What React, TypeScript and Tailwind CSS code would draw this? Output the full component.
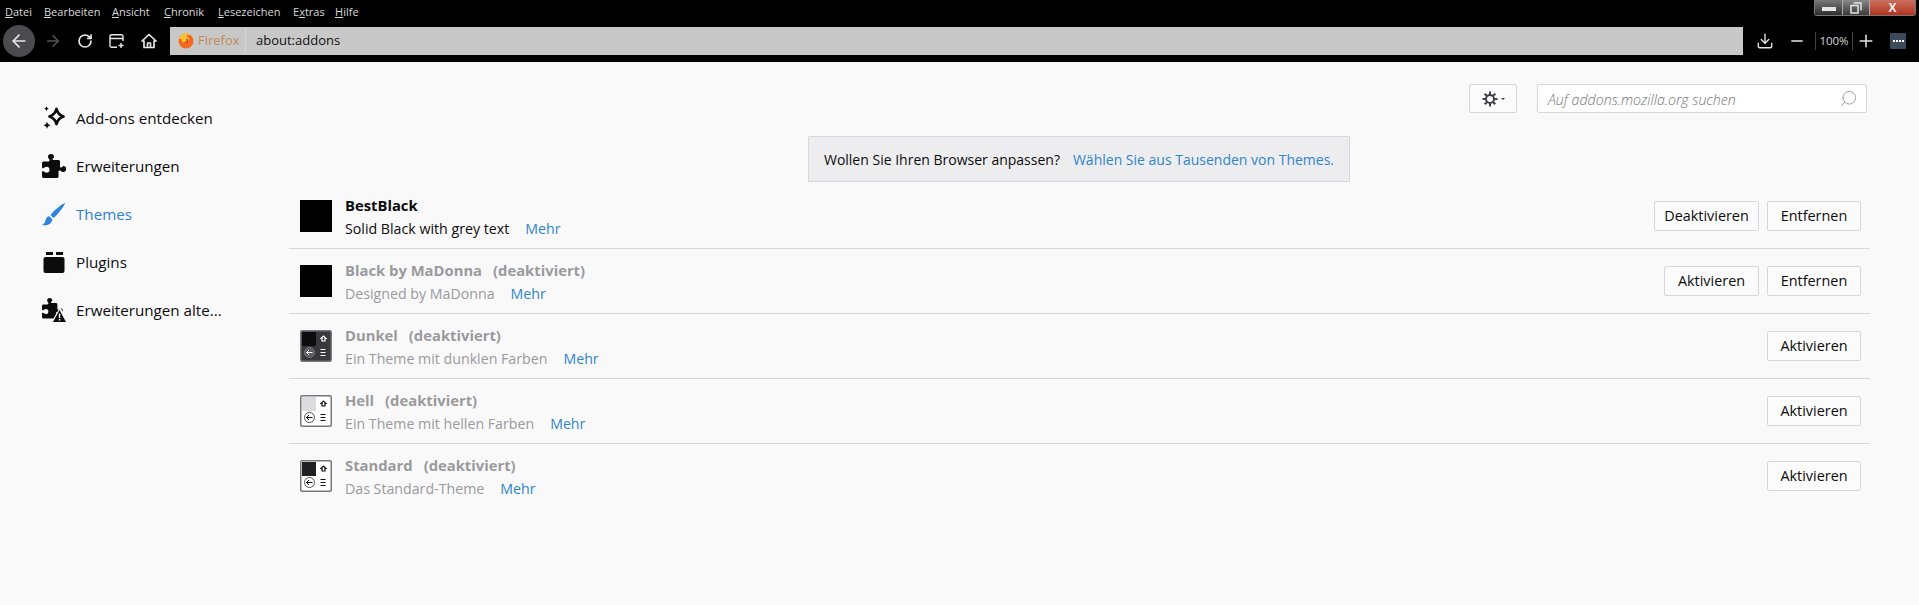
import { ArrowLeft, ArrowRight, Download, Minus, Plus, RotateCw, Search } from "lucide-react";

const puzzlePath =
  "M14.5 8c-.97 0-1 1-1.75 1S12 8.75 12 8V5c0-1-1-1-1-1H8c-.75 0-1-.25-1-.75S8 3 8 2a2 2 0 0 0-4 0c0 1 1 1.25 1 2s-.25 1-1 1H1S0 5 0 6v2.5c0 .75.25 1 .75 1S2 8.5 3 8.5a2 2 0 1 1 0 4c-1 0-1.5-1-2.25-1S0 11.75 0 12.5V15c0 1 1 1 1 1h9c1 0 1-1 1-1v-3c0-.75.25-1 1-1s.75 1 1.75 1a2 2 0 0 0 .75-4z";

function DiscoverIcon() {
  return (
    <svg viewBox="0 0 24 24" className="w-6 h-6">
      <path d="M14.500 3c1 4.200 2.600 6 7 7.500-4.400 1.500-6 3.300-7 7.500-1-4.200-2.800-6-7-7.500 4.200-1.500 6-3.300 7-7.500z" fill="none" stroke="#0c0c0d" strokeWidth="2.800" strokeLinejoin="round" />
      <path d="M4.500 0c.3 1.700 1 2.400 2.700 2.700-1.700.3-2.400 1-2.700 2.700-.3-1.700-1-2.400-2.700-2.700 1.700-.3 2.400-1 2.700-2.700zM5 15.500c.5 2.400 1.400 3.300 3.800 3.800-2.400.5-3.300 1.400-3.800 3.800-.5-2.400-1.400-3.300-3.800-3.800 2.400-.5 3.300-1.400 3.800-3.800z" fill="#0c0c0d" />
    </svg>
  );
}

function PuzzleIcon() {
  return (
    <svg viewBox="0 0 16 16" className="w-6 h-6">
      <path d={puzzlePath} fill="#0c0c0d" />
    </svg>
  );
}

function BrushIcon() {
  return (
    <svg viewBox="0 0 24 24" className="w-6 h-6">
      <path d="M23.500 0.500C18 3.500 12 8.500 8.500 13l3 3C16 12 21 6 23.500 0.500z" fill="#2a84e0" />
      <path d="M7.300 14.200c-3.300.5-3.300 3-4 5-.4 1.300-1.300 2.700-3.300 3.800 4.500.8 9.800-.3 10.300-5.800z" fill="#2a84e0" />
    </svg>
  );
}

function PluginIcon() {
  return (
    <svg viewBox="0 0 24 24" className="w-6 h-6">
      <path d="M4 2h7v3H4zM14 2h7v3h-7z" fill="#0c0c0d" />
      <rect x="1.500" y="7" width="21" height="16" rx="2" fill="#0c0c0d" />
    </svg>
  );
}

function LegacyIcon() {
  return (
    <svg viewBox="0 0 24 24" className="w-6 h-6">
      <path d={puzzlePath} fill="#0c0c0d" transform="scale(1.280)" />
      <path d="M18 9 27 25H9z" fill="#f9f9fa" />
      <path d="M17.500 12 24 24H11z" fill="#0c0c0d" />
      <path d="M16.800 15.500h1.500v4.500h-1.500zM16.800 21h1.500v1.500h-1.500z" fill="#f9f9fa" />
    </svg>
  );
}

function GearIcon() {
  return (
    <svg viewBox="0 0 16 16" className="w-4 h-4" fill="none" stroke="#3f4148">
      <circle cx="8" cy="8" r="4" strokeWidth="2" />
      <path d="M8 0.500v3M8 12.500v3M0.500 8h3M12.500 8h3M2.700 2.700l2.100 2.100M11.200 11.200l2.100 2.100M13.300 2.700l-2.100 2.100M4.800 11.200l-2.100 2.100" strokeWidth="2" />
    </svg>
  );
}

function FirefoxLogo() {
  return (
    <svg viewBox="0 0 16 16" className="w-4 h-4">
      <circle cx="8" cy="8" r="7.500" fill="#f26a1b" />
      <path d="M1 6c1-3.500 4-5.500 7-5.500 2 0 3.500.6 5 2-2-.8-4-.5-5 .5 2 .5 3 1.800 3 3.500 0 2-1.500 3.500-3.500 3.500C5.500 10 3.500 8.500 3.500 6z" fill="#ffc22e" />
      <path d="M8 5.500c1.500.3 2.300 1.200 2.300 2.300 0 1.300-1 2.200-2.300 2.200-.9 0-1.600-.4-2-1 1.300.2 2.700-.2 2.800-1.400 0-.9-.4-1.500-.8-2.100z" fill="#d7263d" />
    </svg>
  );
}

function ThemePreview({ top, body, back }: { top: string; body: string; back: string }) {
  const ink = body === "#ffffff" ? "#111111" : "#ffffff";
  return (
    <svg viewBox="0 0 32 32" className="w-8 h-8">
      <rect x="0.750" y="0.750" width="30.500" height="30.500" rx="1.500" fill={body} stroke="#77777c" strokeWidth="1.500" />
      <rect x="2" y="2" width="14" height="14" fill={top} />
      <path d="M20.500 8.500l2.500-2.500 2.500 2.500h-1v2.500h-3v-2.500z" transform="translate(0.500 0)" fill="none" stroke={ink} strokeWidth="1.200" />
      <circle cx="9.500" cy="22.500" r="5" fill={back} stroke={body === "#ffffff" ? "#555555" : "#777777"} />
      <path d="M12.500 22.500h-6M9 20l-2.500 2.500L9 25" fill="none" stroke={ink} />
      <path d="M20.500 19.500h5M20.500 22.500h5M20.500 25.500h5" stroke={ink} />
    </svg>
  );
}

const menus: [string, string, string, string][] = [
  ["", "D", "atei", "w-[39px]"],
  ["", "B", "earbeiten", "w-[68px]"],
  ["", "A", "nsicht", "w-[52px]"],
  ["", "C", "hronik", "w-[54px]"],
  ["", "L", "esezeichen", "w-[75px]"],
  ["E", "x", "tras", "w-[42px]"],
  ["", "H", "ilfe", "w-[40px]"],
];

const sideItems = [
  { label: "Add-ons entdecken", icon: <DiscoverIcon /> },
  { label: "Erweiterungen", icon: <PuzzleIcon /> },
  { label: "Themes", icon: <BrushIcon />, active: true },
  { label: "Plugins", icon: <PluginIcon /> },
  { label: "Erweiterungen alte...", icon: <LegacyIcon /> },
];

const themes = [
  { name: "BestBlack", desc: "Solid Black with grey text", enabled: true, preview: <div className="w-8 h-8 bg-black" />, remove: true },
  { name: "Black by MaDonna", desc: "Designed by MaDonna", preview: <div className="w-8 h-8 bg-black" />, remove: true },
  { name: "Dunkel", desc: "Ein Theme mit dunklen Farben", preview: <ThemePreview top="#0c0c0d" body="#38383d" back="#5a5a5f" /> },
  { name: "Hell", desc: "Ein Theme mit hellen Farben", preview: <ThemePreview top="#dcdcde" body="#ffffff" back="#ffffff" /> },
  { name: "Standard", desc: "Das Standard-Theme", preview: <ThemePreview top="#202023" body="#ffffff" back="#ffffff" /> },
];

function ActionButton({ label, className }: { label: string; className: string }) {
  return (
    <button className={`h-[30px] border border-[#d7d7db] rounded-[2px] bg-[#fbfbfb] text-[14.400px] text-[#0c0c0d] ${className}`}>
      {label}
    </button>
  );
}

export default function App() {
  return (
    <div className="w-[1919px] h-[605px] overflow-hidden bg-[#f9f9fa] font-['Open_Sans','Noto_Sans',sans-serif]">
      <div className="h-[62px] bg-black">
        <div className="flex justify-between h-[25px]">
          <div className="flex pl-[5px] pt-[4px] text-[11px] leading-[16px] text-[#d8d8d8]">
            {menus.map(([before, key, after, width]) => (
              <span key={key} className={width}>
                {before}
                <span className="underline">{key}</span>
                {after}
              </span>
            ))}
          </div>
          <div className="flex h-[16px] w-[102px] mr-[3px] border border-[#777] border-t-0 rounded-b-[3px] overflow-hidden">
            <div className="w-[28px] flex items-end justify-center pb-[4px] bg-gradient-to-b from-[#7a7a7a] to-[#2e2e2e] border-r border-[#aaa]">
              <div className="w-[14px] h-[4px] bg-[#e6e6e6]" />
            </div>
            <div className="w-[27px] flex items-center justify-center bg-gradient-to-b from-[#8a8a8a] to-[#3a3a3a] border-r border-[#aaa]">
              <svg viewBox="0 0 12 12" className="w-3 h-3" fill="none" stroke="#e6e6e6" strokeWidth="1.500">
                <rect x="1" y="3.500" width="7" height="7.500" />
                <path d="M3.500 1h7.500v7.500" />
              </svg>
            </div>
            <div className="flex-1 flex items-center justify-center bg-gradient-to-b from-[#c9705f] to-[#b5301c] text-[12px] leading-[14px] font-bold text-[#eeeeee]">
              X
            </div>
          </div>
        </div>
        <div className="flex items-center h-[32px] pl-[3px]">
          <div className="w-8 h-8 rounded-full bg-[#4a4a4f] flex items-center justify-center">
            <ArrowLeft size={20} color="#e8e8e8" strokeWidth={2} />
          </div>
          <div className="ml-[8px] w-[20px] flex justify-center">
            <ArrowRight size={18} color="#555555" strokeWidth={2} />
          </div>
          <div className="ml-[12px] w-[20px] flex justify-center">
            <RotateCw size={16} color="#e8e8e8" strokeWidth={2.500} />
          </div>
          <div className="ml-[12px] w-[20px] flex justify-center">
            <svg viewBox="0 0 16 16" className="w-4 h-4" fill="none" stroke="#e8e8e8" strokeWidth="1.400">
              <path d="M8 14.300H2.500a1.500 1.500 0 0 1-1.500-1.500V3.200a1.500 1.500 0 0 1 1.500-1.500h10a1.500 1.500 0 0 1 1.500 1.500V8M1 5.500h13M12 10v5M9.500 12.500h5" />
            </svg>
          </div>
          <div className="ml-[12px] w-[20px] flex justify-center">
            <svg viewBox="0 0 16 16" className="w-4 h-4" fill="none" stroke="#e8e8e8" strokeWidth="1.700">
              <path d="M1 8l7-6.500L15 8h-2v6.500H3V8zM6.500 14.500V10h3v4.500" strokeLinejoin="round" />
            </svg>
          </div>
          <div className="ml-[11px] w-[1573px] h-[28px] bg-[#c8c8c8] flex items-center text-[13px]">
            <div className="w-[76px] h-[24px] flex items-center pl-[8px] gap-[4px] border-r border-[#d8d8d8]">
              <FirefoxLogo />
              <span className="text-[#c08a5a]">Firefox</span>
            </div>
            <span className="ml-[10px] text-[#111]">about:addons</span>
          </div>
          <div className="ml-[12px] w-[20px] flex justify-center">
            <Download size={18} color="#e8e8e8" strokeWidth={1.800} />
          </div>
          <div className="ml-[12px] w-[20px] flex justify-center">
            <Minus size={18} color="#e8e8e8" strokeWidth={1.800} />
          </div>
          <div className="ml-[8px] w-[38px] h-[18px] flex items-center justify-center border-x border-[#444] text-[11.500px] text-[#d8d8d8]">
            100%
          </div>
          <div className="ml-[2px] w-[22px] flex justify-center">
            <Plus size={20} color="#e8e8e8" strokeWidth={1.800} />
          </div>
          <div className="ml-[13px] w-4 h-4 rounded-[1px] bg-[#3b4a5a] flex items-center justify-center gap-[1px]">
            <span className="w-[2px] h-[2px] bg-white" />
            <span className="w-[2px] h-[2px] bg-white" />
            <span className="w-[2px] h-[2px] bg-white" />
            <span className="w-[2px] h-[2px] bg-white" />
          </div>
        </div>
      </div>

      <div className="flex">
        <nav className="w-[289px] shrink-0 pt-[32px] pl-[42px]">
          {sideItems.map((item) => (
            <div key={item.label} className="h-[48px] flex items-center gap-[10px]">
              {item.icon}
              <span className={`text-[15.200px] ${item.active ? "text-[#2f7fcf]" : "text-[#0c0c0d]"}`}>{item.label}</span>
            </div>
          ))}
        </nav>

        <main className="w-[1581px] pt-[22px]">
          <div className="flex justify-end pr-[3px] gap-[20px]">
            <div className="w-[48px] h-[29px] border border-[#d7d7db] rounded-[2px] bg-[#fbfbfb] flex items-center justify-center gap-[3px]">
              <GearIcon />
              <span className="w-0 h-0 border-x-[2px] border-x-transparent border-t-[2px] border-t-[#3f4148]" />
            </div>
            <div className="w-[330px] h-[29px] border border-[#d7d7db] rounded-[2px] bg-white flex items-center justify-between pl-[10px] pr-[8px]">
              <span className="pt-[2px] text-[14.200px] italic font-light text-[#737373]">Auf addons.mozilla.org suchen</span>
              <Search size={19} color="#8a8a8a" strokeWidth={1} className="-scale-x-100" />
            </div>
          </div>

          <div className="mt-[23px] ml-[519px] w-[542px] h-[46px] border border-[#d7d7db] rounded-[1px] bg-[#ededf0] flex items-center justify-center gap-[13px] text-[14px] whitespace-nowrap">
            <span className="text-[#0c0c0d]">Wollen Sie Ihren Browser anpassen?</span>
            <span className="text-[#2f86c8]">Wählen Sie aus Tausenden von Themes.</span>
          </div>

          <div className="mt-[2px]">
            {themes.map((theme, i) => (
              <div
                key={theme.name}
                className={`h-[65px] flex items-center pl-[11px] pr-[9px] border-b ${i < themes.length - 1 ? "border-[#d7d7db]" : "border-transparent"}`}
              >
                {theme.preview}
                <div className="ml-[13px] flex-1 pt-[1px]">
                  <div className={`text-[14.800px] leading-[24px] font-bold ${theme.enabled ? "text-[#0c0c0d]" : "text-[#9a9a9d]"}`}>
                    {theme.name}
                    {!theme.enabled && <span className="ml-[11px]">(deaktiviert)</span>}
                  </div>
                  <div className={`text-[14.200px] leading-[24px] ${theme.enabled ? "text-[#0c0c0d]" : "text-[#9a9a9d]"}`}>
                    {theme.desc}
                    <span className="ml-[16px] text-[#2f86c8]">Mehr</span>
                  </div>
                </div>
                <div className="flex gap-[8px]">
                  {theme.enabled && <ActionButton label="Deaktivieren" className="w-[105px]" />}
                  {!theme.enabled && theme.remove && <ActionButton label="Aktivieren" className="w-[95px]" />}
                  {theme.remove ? (
                    <ActionButton label="Entfernen" className="w-[94px]" />
                  ) : (
                    <ActionButton label="Aktivieren" className="w-[94px]" />
                  )}
                </div>
              </div>
            ))}
          </div>
        </main>
      </div>
    </div>
  );
}
